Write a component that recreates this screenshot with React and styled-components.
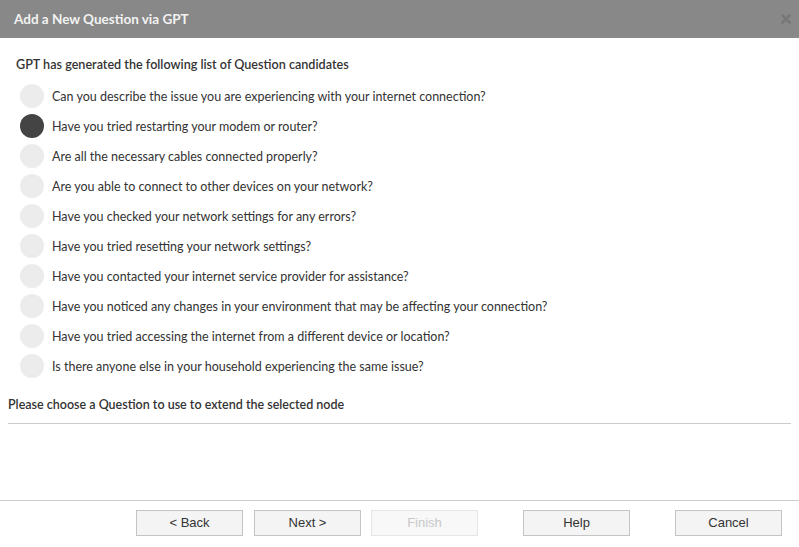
import React, { useState } from "react";
import styled, { createGlobalStyle } from "styled-components";

const Global = createGlobalStyle`
  html, body { margin: 0; padding: 0; background: #fff; }
  body { font-family: Lato, "Open Sans", sans-serif; }
  * { box-sizing: border-box; }
`;

const Dialog = styled.div`
  width: 799px;
  height: 547px;
  display: flex;
  flex-direction: column;
  background: #fff;
`;

const TitleBar = styled.div`
  height: 38px;
  flex: none;
  background: #888888;
  display: flex;
  align-items: center;
  justify-content: space-between;
  padding: 0 8px 0 14px;
`;

const Title = styled.div`
  font-family: Lato, sans-serif;
  font-weight: 700;
  font-size: 13.5px;
  color: #f2f2f2;
`;

const CloseBtn = styled.button`
  border: 0;
  background: transparent;
  padding: 0;
  width: 10px;
  height: 10px;
  display: flex;
  align-items: center;
  justify-content: center;
  cursor: pointer;
`;

const Body = styled.div`
  flex: 1;
  padding: 19px 8px 0 8px;
  display: flex;
  flex-direction: column;
`;

const Section = styled.div`
  padding-left: 8px;
  display: flex;
  flex-direction: column;
`;

const Heading = styled.div`
  font-size: 12.6px;
  line-height: 16px;
  font-weight: 600;
  color: #333;
  margin-bottom: 8px;
`;

const List = styled.div`
  display: flex;
  flex-direction: column;
`;

const Row = styled.label`
  height: 30px;
  display: flex;
  align-items: center;
  gap: 8px;
  padding-left: 4px;
  cursor: pointer;
`;

const Radio = styled.span`
  width: 24px;
  height: 24px;
  border-radius: 50%;
  background: ${(p) => (p.$checked ? "#444444" : "#ececec")};
  flex: none;
`;

const QText = styled.span`
  font-size: 12.5px;
  color: #333;
`;

const Prompt = styled.div`
  margin-top: 16px;
  font-size: 12.5px;
  line-height: 16px;
  font-weight: 600;
  color: #333;
  padding-bottom: 10px;
  border-bottom: 1px solid #cccccc;
`;

const Footer = styled.div`
  flex: none;
  height: 47px;
  border-top: 1px solid #cccccc;
  display: flex;
  justify-content: flex-end;
  align-items: flex-start;
  padding: 9px 17px 0 0;
`;

const Button = styled.button`
  width: 107px;
  height: 26px;
  margin-left: ${(p) => p.$ml}px;
  background: ${(p) => (p.disabled ? "#f8f8f8" : "#f4f4f4")};
  border: 1px solid ${(p) => (p.disabled ? "#e6e6e6" : "#c4c4c4")};
  color: ${(p) => (p.disabled ? "#c8c8c8" : "#333")};
  font-family: "Liberation Sans", Arial, sans-serif;
  font-size: 13px;
  padding: 0 0 2px 0;
  border-radius: 0;
  cursor: ${(p) => (p.disabled ? "default" : "pointer")};
`;

const questions = [
  "Can you describe the issue you are experiencing with your internet connection?",
  "Have you tried restarting your modem or router?",
  "Are all the necessary cables connected properly?",
  "Are you able to connect to other devices on your network?",
  "Have you checked your network settings for any errors?",
  "Have you tried resetting your network settings?",
  "Have you contacted your internet service provider for assistance?",
  "Have you noticed any changes in your environment that may be affecting your connection?",
  "Have you tried accessing the internet from a different device or location?",
  "Is there anyone else in your household experiencing the same issue?",
];

export default function App() {
  const [sel, setSel] = useState(1);
  return (
    <>
      <Global />
      <Dialog>
        <TitleBar>
          <Title>Add a New Question via GPT</Title>
          <CloseBtn aria-label="Close">
            <svg width="10" height="10" viewBox="0 0 10 10">
              <path d="M1.5 1.5 L8.5 8.5 M8.5 1.5 L1.5 8.5" stroke="#777" strokeWidth="2.6" strokeLinecap="square" />
            </svg>
          </CloseBtn>
        </TitleBar>
        <Body>
          <Section>
            <Heading>GPT has generated the following list of Question candidates</Heading>
            <List>
              {questions.map((q, i) => (
                <Row key={i} onClick={() => setSel(i)}>
                  <Radio $checked={sel === i} />
                  <QText>{q}</QText>
                </Row>
              ))}
            </List>
          </Section>
          <Prompt>Please choose a Question to use to extend the selected node</Prompt>
        </Body>
        <Footer>
          <Button $ml={0}>&lt; Back</Button>
          <Button $ml={11}>Next &gt;</Button>
          <Button $ml={10} disabled>Finish</Button>
          <Button $ml={45}>Help</Button>
          <Button $ml={45}>Cancel</Button>
        </Footer>
      </Dialog>
    </>
  );
}
